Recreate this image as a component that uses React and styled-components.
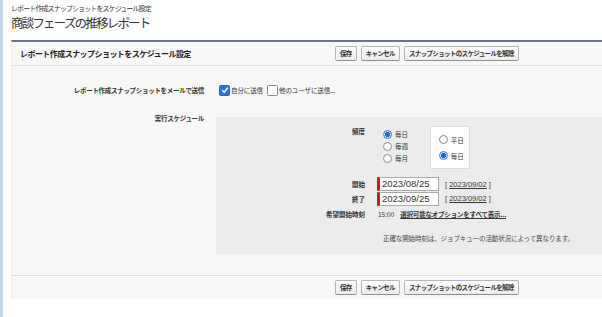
import React from 'react'
import styled, { createGlobalStyle } from 'styled-components'

const GlobalStyle = createGlobalStyle`
    html, body {
        margin: 0;
        padding: 0;
        background: #fff;
        font-family: "Noto Sans CJK JP", "Liberation Sans", sans-serif;
        color: #333;
    }
`

const Buttons = () => (
    <ButtonGroup>
        <Btn>保存</Btn>
        <Btn>キャンセル</Btn>
        <Btn>スナップショットのスケジュールを解除</Btn>
    </ButtonGroup>
)

const Radio = ({ checked, label }) => (
    <RadioRow>
        <RadioDot checked={checked} />
        <OptionText>{label}</OptionText>
    </RadioRow>
)

const Check = ({ checked }) => (
    <CheckBox checked={checked}>
        {checked && (
            <svg width="8" height="8" viewBox="0 0 8 8">
                <path d="M1.2 4.2 L3.2 6.2 L6.9 1.6" stroke="#fff" strokeWidth="1.5" fill="none" />
            </svg>
        )}
    </CheckBox>
)

const App = () => {
    return (
        <Page>
            <GlobalStyle />
            <Strip />
            <Main>
                <Crumb>レポート作成スナップショットをスケジュール設定</Crumb>
                <Title>商談フェーズの推移レポート</Title>
                <Panel>
                    <Header>
                        <HeaderTitle>レポート作成スナップショットをスケジュール設定</HeaderTitle>
                        <Buttons />
                    </Header>
                    <Body>
                        <Label>レポート作成スナップショットをメールで送信</Label>
                        <CheckLine>
                            <Check checked />
                            <OptionText>自分に送信</OptionText>
                            <Check />
                            <OptionText>他のユーザに送信...</OptionText>
                        </CheckLine>
                        <Label top>実行スケジュール</Label>
                        <ScheduleBox>
                            <BoxLabel top>頻度</BoxLabel>
                            <FreqRow>
                                <RadioList>
                                    <Radio checked label="毎日" />
                                    <Radio label="毎週" />
                                    <Radio label="毎月" />
                                </RadioList>
                                <SubBox>
                                    <Radio label="平日" />
                                    <Radio checked label="毎日" />
                                </SubBox>
                            </FreqRow>
                            <BoxLabel>開始</BoxLabel>
                            <DateLine>
                                <DateInput>2023/08/25</DateInput>
                                <DateLink>[ <u>2023/09/02</u> ]</DateLink>
                            </DateLine>
                            <BoxLabel>終了</BoxLabel>
                            <DateLine>
                                <DateInput>2023/09/25</DateInput>
                                <DateLink>[ <u>2023/09/02</u> ]</DateLink>
                            </DateLine>
                            <BoxLabel>希望開始時刻</BoxLabel>
                            <TimeLine>
                                <span>15:00</span>
                                <TimeLink>選択可能なオプションをすべて表示...</TimeLink>
                            </TimeLine>
                            <Note>正確な開始時刻は、ジョブキューの活動状況によって異なります。</Note>
                        </ScheduleBox>
                    </Body>
                    <Footer>
                        <Buttons />
                    </Footer>
                </Panel>
            </Main>
        </Page>
    )
}

export default App

const Page = styled.div`
    display: flex;
    width: 602px;
    height: 317px;
    overflow: hidden;
`

const Strip = styled.div`
    width: 3px;
    background: #c3d3e8;
    flex-shrink: 0;
`

const Main = styled.div`
    flex: 1;
    padding-left: 8px;
    display: flex;
    flex-direction: column;
`

const Crumb = styled.div`
    font-size: 7px;
    line-height: 8px;
    margin-top: 4px;
    letter-spacing: -0.9px;
    color: #333;
`

const Title = styled.h1`
    margin: 3px 0 0 0;
    font-size: 12.5px;
    font-weight: 400;
    line-height: 16px;
    letter-spacing: -1.8px;
    color: #333;
`

const Panel = styled.div`
    margin-top: 9px;
    border-top: 2px solid #6d7680;
    border-left: 1px solid #ececec;
    background: #f8f8f8;
`

const Header = styled.div`
    height: 23px;
    display: flex;
    align-items: center;
    padding-left: 8px;
    border-bottom: 1px solid #e2e2e2;
`

const HeaderTitle = styled.div`
    font-size: 8px;
    font-weight: 700;
    letter-spacing: -0.55px;
    width: 315px;
    color: #222;
`

const ButtonGroup = styled.div`
    display: flex;
    gap: 4px;
`

const Btn = styled.button`
    height: 15px;
    padding: 0 4px;
    font-family: "Noto Sans CJK JP", sans-serif;
    font-size: 6.5px;
    font-weight: 700;
    letter-spacing: -0.65px;
    color: #333;
    border: 1px solid #b5b5b5;
    border-bottom-color: #8f8f8f;
    border-radius: 2px;
    background: linear-gradient(#ffffff, #ececec);
    line-height: 13px;
`

const Body = styled.div`
    display: grid;
    grid-template-columns: 192px 1fr;
    column-gap: 12px;
    row-gap: 21px;
    padding: 18px 0 21px 0;
    border-bottom: 1px solid #dcdcdc;
`

const Label = styled.div`
    text-align: right;
    font-size: 6.5px;
    font-weight: 700;
    letter-spacing: -0.3px;
    color: #333;
    line-height: 12px;
    margin-top: ${p => (p.top ? '-5px' : '0')};
`

const CheckLine = styled.div`
    display: flex;
    align-items: center;
    height: 12px;
    padding-left: 3px;
`

const CheckBox = styled.span`
    width: 9px;
    height: 9px;
    display: inline-flex;
    align-items: center;
    justify-content: center;
    border-radius: 1.5px;
    border: 1px solid ${p => (p.checked ? '#2a67b8' : '#8a8a8a')};
    background: ${p => (p.checked ? '#3272c9' : '#fff')};
    margin-right: 1px;
    margin-left: ${p => (p.checked ? '0' : '4px')};
`

const OptionText = styled.span`
    font-size: 6.5px;
    letter-spacing: -0.1px;
    color: #333;
    line-height: 10px;
`

const ScheduleBox = styled.div`
    background: #ececec;
    display: grid;
    grid-template-columns: 149px 1fr;
    grid-template-rows: 51px 14px 15px 16px 1fr;
    column-gap: 12px;
    align-items: center;
    padding: 9px 0 0 0;
    height: 128px;
`

const BoxLabel = styled.div`
    text-align: right;
    font-size: 6.5px;
    font-weight: 700;
    color: #333;
    align-self: ${p => (p.top ? 'start' : 'center')};
`

const FreqRow = styled.div`
    display: flex;
    align-items: flex-start;
    gap: 22px;
    align-self: start;
    height: 43px;
`

const RadioList = styled.div`
    display: flex;
    flex-direction: column;
    padding-top: 2px;
    padding-left: 6px;
`

const RadioRow = styled.div`
    display: flex;
    align-items: center;
    height: 12px;
    gap: 3px;
`

const RadioDot = styled.span`
    width: 7px;
    height: 7px;
    border-radius: 50%;
    border: 1px solid ${p => (p.checked ? '#3a7bd0' : '#8a8a8a')};
    background: ${p => (p.checked ? 'radial-gradient(circle, #2a66bd 0 2.4px, #cfe0f5 2.8px)' : '#fff')};
`

const SubBox = styled.div`
    width: 40px;
    height: 43px;
    box-sizing: border-box;
    background: #fff;
    border: 1px solid #dcdcdc;
    display: flex;
    flex-direction: column;
    justify-content: center;
    gap: 4px;
    padding-left: 8px;
`

const DateLine = styled.div`
    display: flex;
    align-items: center;
    gap: 6px;
`

const DateInput = styled.div`
    width: 56px;
    height: 12px;
    background: #fff;
    border: 1px solid #a9a9a9;
    border-left: 3px solid #b3262a;
    font-family: "Liberation Sans", sans-serif;
    font-size: 9.5px;
    line-height: 12px;
    padding-left: 2px;
    color: #333;
`

const DateLink = styled.span`
    font-size: 7.5px;
    font-family: "Liberation Sans", sans-serif;
    color: #333;
    u {
        text-decoration: underline;
    }
`

const TimeLine = styled.div`
    display: flex;
    align-items: center;
    gap: 6px;
    font-size: 6.5px;
    color: #333;
    padding-left: 1px;
`

const TimeLink = styled.span`
    text-decoration: underline;
    font-weight: 700;
    letter-spacing: -0.2px;
`

const Note = styled.div`
    grid-column: 2;
    font-size: 6.5px;
    color: #444;
    letter-spacing: -0.1px;
    padding-left: 6px;
    align-self: center;
`

const Footer = styled.div`
    height: 23px;
    display: flex;
    align-items: center;
    padding-left: 323px;
    background: #f8f8f8;
`
